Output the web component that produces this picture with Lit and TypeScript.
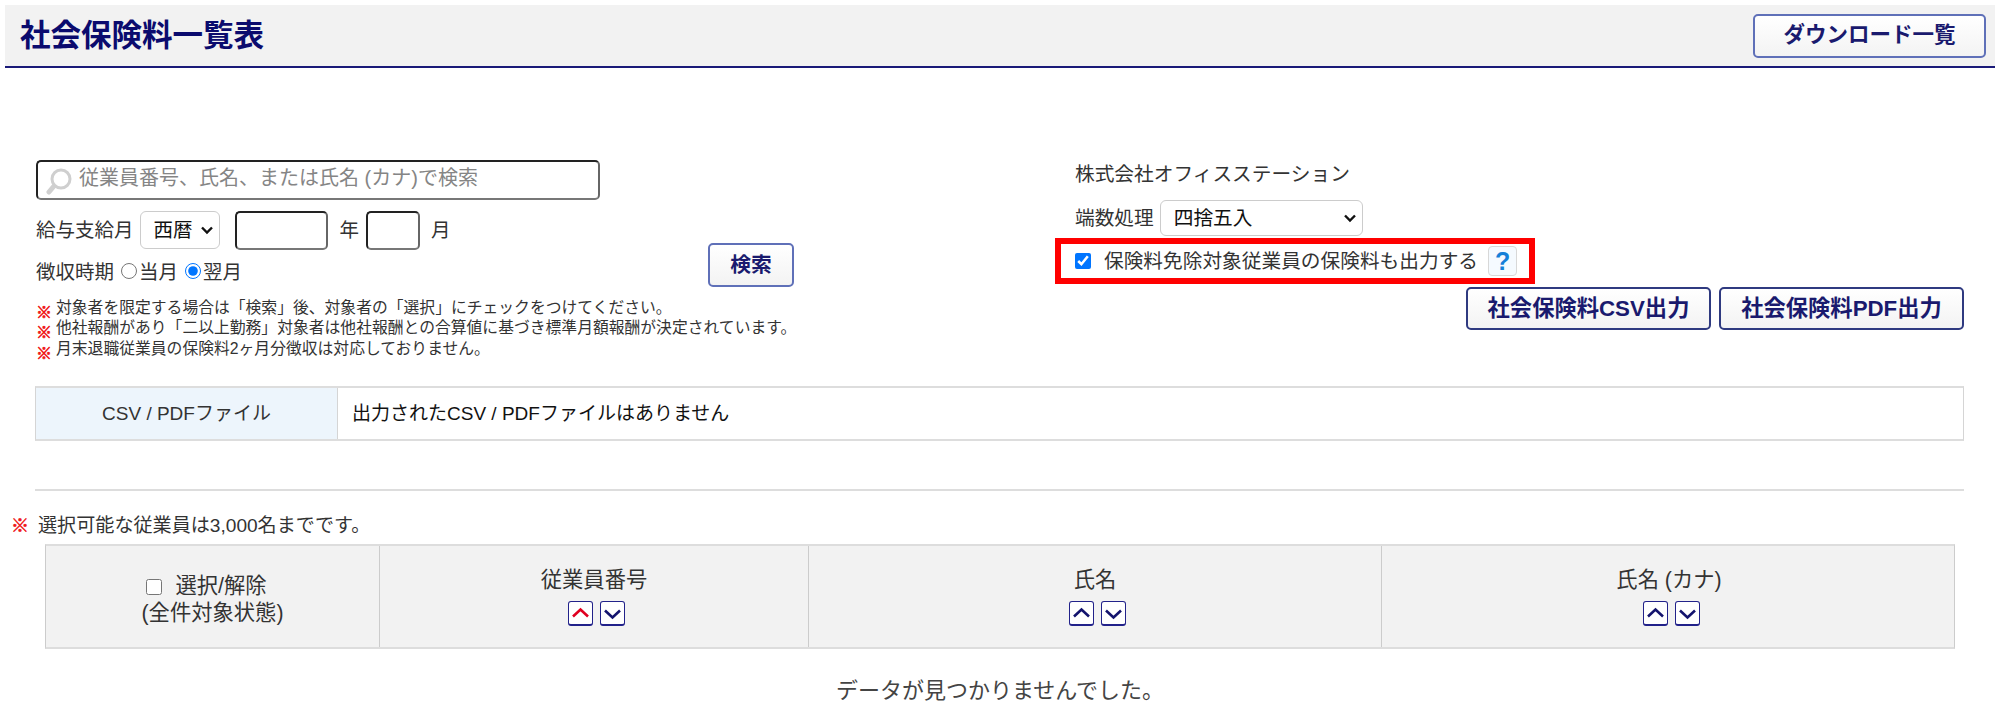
import { LitElement, html, css, svg } from "lit";
import { customElement } from "lit/decorators.js";

const up = svg`<path d="M4 14.5 L11.5 7.5 L19 14.5" fill="none" stroke="currentColor" stroke-width="2.6"/>`;
const down = svg`<path d="M4 8.5 L11.5 15.5 L19 8.5" fill="none" stroke="currentColor" stroke-width="2.6"/>`;

@customElement("app-root")
export class AppRoot extends LitElement {
  static styles = css`
    :host {
      display: block;
      width: 2000px;
      height: 713px;
      overflow: hidden;
      background: #fff;
      color: #333;
      font-family: "Liberation Sans", "Noto Sans CJK JP", sans-serif;
      font-size: 19.5px;
      line-height: 1.25;
    }
    * { box-sizing: border-box; }
    .page { padding: 5px 5px 0; }
    .header {
      height: 63px;
      background: #f2f2f2;
      border-bottom: 2px solid #1a1a78;
      display: flex;
      align-items: center;
      justify-content: space-between;
      padding: 0 9px 0 15px;
    }
    h1 { margin: 0; font-size: 30.5px; font-weight: 700; color: #0b0b6e; }
    .btn {
      font: inherit;
      font-weight: 700;
      color: #1a1a6e;
      background: linear-gradient(#fff, #f3f3f3);
      border: 2px solid #5f70b8;
      border-radius: 5px;
      height: 44px;
      padding: 0;
      display: inline-flex;
      align-items: center;
      justify-content: center;
    }
    .btn.dl { width: 233px; font-size: 21.5px; }
    .btn.search { width: 86px; margin-top: 43px; font-size: 20.8px; }
    .btn.out { width: 245px; height: 43px; border-color: #2f3a80; font-size: 22.3px; }
    .filters {
      display: flex;
      justify-content: space-between;
      padding: 92px 31px 0;
      height: 318px;
    }
    .left { width: 760px; }
    .searchbox {
      width: 564px;
      height: 40px;
      display: flex;
      align-items: center;
      gap: 6px;
      padding: 0 8px;
      border: 2px solid;
      border-color: #222 #666 #777 #222;
      border-radius: 5px;
    }
    .searchbox svg { flex: none; margin-top: 3px; }
    .searchbox input {
      border: 0;
      outline: 0;
      padding: 0 0 4px;
      flex: 1;
      font: inherit;
      font-size: 20px;
      background: transparent;
    }
    .searchbox input::placeholder { color: #858585; opacity: 1; }
    .mid { display: flex; width: 758px; justify-content: space-between; }
    .row { display: flex; align-items: center; }
    .payrow { margin-top: 10px; height: 40px; }
    .sel {
      font: inherit;
      color: #111;
      appearance: none;
      background: #fff url("data:image/svg+xml,%3Csvg xmlns='http://www.w3.org/2000/svg' width='14' height='10'%3E%3Cpath d='M2 2.5 L7 7.5 L12 2.5' fill='none' stroke='%23111' stroke-width='2.4'/%3E%3C/svg%3E") no-repeat;
      border: 1px solid #ccc;
      border-radius: 6px;
      height: 38px;
      padding: 0 0 0 13px;
    }
    .sel.era { width: 80px; margin: 0 15px 0 6px; background-position: right 5px center; }
    .sel.round { width: 203px; margin-left: 6px; height: 36px; background-position: right 5px center; }
    .num {
      height: 39px;
      border: 2px solid;
      border-color: #222 #666 #777 #222;
      border-radius: 5px;
      font: inherit;
      padding: 0;
      background: #fff;
    }
    .num.y { width: 93px; margin-right: 12px; }
    .num.m { width: 54px; margin: 0 11px 0 7px; }
    .duerow { margin-top: 10px; height: 24px; }
    .duerow input { margin: 0 2px 0 7px; width: 16px; height: 16px; position: relative; top: -1px; }
    .duerow input + span + input { margin-left: 7px; }
    .notes { margin: 11px 0 0; padding: 0; list-style: none; font-size: 15.8px; line-height: 20.3px; }
    .notes li { display: flex; gap: 5px; white-space: nowrap; }
    .kome { color: #f01818; font-weight: 700; -webkit-text-stroke: 0.6px #f01818; }
    .notes .kome { font-size: 16px; position: relative; top: 5px; width: 15px; flex: none; }
    .right { width: 909px; display: flex; flex-direction: column; font-size: 19.7px; }
    .company { padding-left: 20px; height: 29px; display: flex; align-items: center; }
    .roundrow { padding-left: 20px; height: 36px; margin-top: 11px; }
    .redbox {
      align-self: flex-start;
      width: 480px;
      height: 46px;
      margin-top: 2px;
      border: 6px solid #f00;
      display: flex;
      align-items: center;
      padding-left: 14px;
    }
    .redbox input { width: 16px; height: 16px; margin: 0 13px 0 0; }
    .help {
      margin-left: 10px;
      width: 29px;
      height: 30px;
      border: 1px solid #d8d8d8;
      border-radius: 4px;
      background: #f5faff;
      color: #1580d8;
      font-weight: 700;
      font-size: 25px;
      display: flex;
      align-items: center;
      justify-content: center;
      line-height: 1;
    }
    .outs { display: flex; justify-content: flex-end; gap: 8px; margin-top: 3px; }
    .file {
      margin: 0 31px 0 30px;
      height: 55px;
      display: flex;
      border: 1px solid #d5d5d5;
      border-top: 2px solid #ddd;
      border-bottom: 2px solid #ddd;
      font-size: 19px;
    }
    .file .th {
      width: 302px;
      background: #edf5fc;
      border-right: 1px solid #d5d5d5;
      display: flex;
      align-items: center;
      justify-content: center;
    }
    .file .td { padding-left: 14px; display: flex; align-items: center; color: #111; }
    hr { margin: 48px 31px 0 30px; border: 0; border-top: 2px solid #ddd; }
    .limit { display: flex; align-items: center; gap: 11px; margin: 24px 0 0 6px; height: 22px; font-size: 19.1px; }
    .limit .kome { font-size: 18px; width: 16px; }
    .grid {
      margin: 7px 40px 0;
      display: grid;
      grid-template-columns: 334px 429px 573px 574px;
      height: 105px;
      background: #f2f2f2;
      border: 1px solid #ccc;
      border-top: 2px solid #ddd;
      border-bottom: 2px solid #ddd;
      text-align: center;
      font-size: 21.3px;
    }
    .cell { display: flex; flex-direction: column; align-items: center; justify-content: center; border-right: 1px solid #ccc; }
    .cell:last-child { border-right: 0; }
    .sel-all { line-height: 27px; padding-top: 6px; }
    .sel-all .first { padding-right: 12px; }
    .sel-all input { width: 16px; height: 16px; margin: 0 13px 0 0; vertical-align: -2px; }
    .sorts { display: flex; gap: 7px; margin: 7px 0 0 5px; }
    .sort {
      width: 25px;
      height: 25px;
      border: 1px solid #22228a;
      border-bottom-width: 2px;
      border-radius: 3px;
      background: #fff;
      color: #14146e;
      display: flex;
      padding: 0;
    }
    .sort.on { color: #e00020; }
    .empty { text-align: center; font-size: 22px; margin-top: 28px; color: #444; }
  `;

  private sorts(active = false) {
    return html`<div class="sorts">
      <button class="sort ${active ? "on" : ""}"><svg width="23" height="22" viewBox="0 0 23 22">${up}</svg></button>
      <button class="sort"><svg width="23" height="22" viewBox="0 0 23 22">${down}</svg></button>
    </div>`;
  }

  render() {
    return html`<div class="page">
      <header class="header">
        <h1>社会保険料一覧表</h1>
        <button class="btn dl">ダウンロード一覧</button>
      </header>

      <section class="filters">
        <div class="left">
          <div class="searchbox">
            <svg width="27" height="27" viewBox="0 0 27 27">
              <path d="M8 18 L3 24" stroke="#d0d0d0" stroke-width="5" stroke-linecap="round"/>
              <circle cx="15" cy="11" r="9" fill="#fff" stroke="#cfcfcf" stroke-width="3"/>
            </svg>
            <input placeholder="従業員番号、氏名、または氏名 (カナ)で検索" />
          </div>
          <div class="mid">
            <div>
              <div class="row payrow">
                <span>給与支給月</span>
                <select class="sel era"><option>西暦</option></select>
                <input class="num y" />
                <span>年</span>
                <input class="num m" />
                <span>月</span>
              </div>
              <div class="row duerow">
                <span>徴収時期</span>
                <input type="radio" name="due" /><span>当月</span>
                <input type="radio" name="due" checked /><span>翌月</span>
              </div>
            </div>
            <button class="btn search">検索</button>
          </div>
          <ul class="notes">
            <li><span class="kome">※</span><span>対象者を限定する場合は「検索」後、対象者の「選択」にチェックをつけてください。</span></li>
            <li><span class="kome">※</span><span>他社報酬があり「二以上勤務」対象者は他社報酬との合算値に基づき標準月額報酬が決定されています。</span></li>
            <li><span class="kome">※</span><span>月末退職従業員の保険料2ヶ月分徴収は対応しておりません。</span></li>
          </ul>
        </div>
        <div class="right">
          <div class="company">株式会社オフィスステーション</div>
          <div class="row roundrow">
            <span>端数処理</span>
            <select class="sel round"><option>四捨五入</option></select>
          </div>
          <div class="redbox">
            <input type="checkbox" checked />
            <span>保険料免除対象従業員の保険料も出力する</span>
            <span class="help">?</span>
          </div>
          <div class="outs">
            <button class="btn out">社会保険料CSV出力</button>
            <button class="btn out">社会保険料PDF出力</button>
          </div>
        </div>
      </section>

      <div class="file">
        <div class="th">CSV / PDFファイル</div>
        <div class="td">出力されたCSV / PDFファイルはありません</div>
      </div>

      <hr />

      <div class="limit"><span class="kome">※</span><span>選択可能な従業員は3,000名までです。</span></div>

      <div class="grid">
        <div class="cell sel-all">
          <div class="first"><input type="checkbox" />選択/解除</div>
          <div>(全件対象状態)</div>
        </div>
        <div class="cell"><div>従業員番号</div>${this.sorts(true)}</div>
        <div class="cell"><div>氏名</div>${this.sorts()}</div>
        <div class="cell"><div>氏名 (カナ)</div>${this.sorts()}</div>
      </div>

      <div class="empty">データが見つかりませんでした。</div>
    </div>`;
  }
}
